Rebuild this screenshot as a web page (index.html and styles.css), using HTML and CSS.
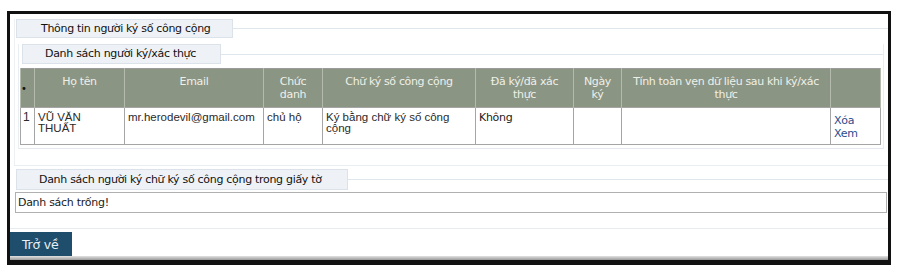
FILE: index.html
```html
<!DOCTYPE html>
<html lang="vi">
<head>
<meta charset="utf-8">
<title>Thông tin người ký số công cộng</title>
<link rel="stylesheet" href="styles.css">
</head>
<body>
<div class="frame">
  <div class="sec1">
    <div class="legend-row">
      <div class="legend legend1">Thông tin người ký số công cộng</div>
      <div class="rule"></div>
    </div>
    <div class="sec2">
      <div class="legend-row">
        <div class="legend legend2">Danh sách người ký/xác thực</div>
        <div class="rule"></div>
      </div>
      <table class="grid">
        <colgroup>
          <col style="width:14px"><col style="width:90px"><col style="width:139px"><col style="width:59px"><col style="width:153px"><col style="width:98px"><col style="width:48px"><col style="width:209px"><col style="width:50px">
        </colgroup>
        <thead>
          <tr>
            <th class="dot">•</th>
            <th>Họ tên</th>
            <th>Email</th>
            <th>Chức<br>danh</th>
            <th>Chữ ký số công cộng</th>
            <th>Đã ký/đã xác<br>thực</th>
            <th>Ngày<br>ký</th>
            <th>Tính toàn vẹn dữ liệu sau khi ký/xác<br>thực</th>
            <th></th>
          </tr>
        </thead>
        <tbody>
          <tr>
            <td class="num">1</td>
            <td class="ar">VŨ VĂN<br>THUẤT</td>
            <td class="ar">mr.herodevil@gmail.com</td>
            <td class="ar">chủ hộ</td>
            <td class="ar">Ký bằng chữ ký số công<br>cộng</td>
            <td class="ta">Không</td>
            <td></td>
            <td></td>
            <td class="links"><a href="#">Xóa</a><br><a href="#">Xem</a></td>
          </tr>
        </tbody>
      </table>
    </div>
  </div>
  <div class="sec3">
    <div class="legend-row">
      <div class="legend legend3">Danh sách người ký chữ ký số công cộng trong giấy tờ</div>
      <div class="rule"></div>
    </div>
    <div class="empty">Danh sách trống!</div>
  </div>
  <div class="actions">
    <button class="back">Trở về</button>
  </div>
  <div class="shade"></div>
</div>
</body>
</html>
```

FILE: styles.css
```css
html, body {
  margin: 0;
  padding: 0;
  background: #fff;
}
body {
  font-family: "DejaVu Sans", Verdana, sans-serif;
  font-size: 11px;
  color: #1a1a1a;
}
.frame {
  margin: 11px 0 0 7px;
  width: 878px;
  border: 3px solid #111;
  border-bottom-width: 5px;
  background: #fff;
  box-sizing: content-box;
}
.sec1 {
  margin: 5px 0 0 4px;
  padding: 0 0 16px 1px;
  border-left: 1px solid #eef1f4;
  border-bottom: 1px solid #e8eef2;
}
.legend-row {
  display: flex;
  align-items: center;
}
.legend {
  box-sizing: border-box;
  background: #eef2f6;
  border: 1px solid #dbe2ea;
  color: #111;
  white-space: nowrap;
  letter-spacing: -0.3px;
}
.legend1 {
  width: 217px;
  height: 19px;
  line-height: 17px;
  padding-left: 24px;
}
.legend2 {
  width: 199px;
  height: 20px;
  line-height: 18px;
  padding-left: 22px;
}
.legend3 {
  width: 332px;
  height: 21px;
  line-height: 19px;
  padding-left: 22px;
}
.rule {
  flex: 1;
  border-top: 1px solid #dfe6ec;
}
.sec2 {
  margin: 6px 4px 0 2px;
  border-left: 1px solid #e9eef2;
  border-right: 1px solid #e9eef2;
  border-bottom: 1px solid #e3e9ee;
  padding: 0 0 3px 1px;
}
.sec2 .legend-row {
  margin-left: 2px;
}
.grid {
  margin-top: 4px;
  border-collapse: collapse;
  table-layout: fixed;
  width: 860px;
  border: 1px solid #9a9a9a;
}
.grid th {
  background: #8b9584;
  color: #eef0e8;
  font-weight: normal;
  font-size: 11px;
  letter-spacing: -0.35px;
  line-height: 13px;
  height: 39px;
  box-sizing: border-box;
  padding: 6px 2px 0;
  vertical-align: top;
  text-align: center;
  border-left: 1px solid #b4baad;
  border-right: 1px solid #b4baad;
}
.grid th.dot {
  color: #111;
  padding: 13px 0 0;
  text-align: left;
  font-size: 10px;
}
.grid td {
  height: 37px;
  box-sizing: border-box;
  border: 1px solid #a5a5a5;
  vertical-align: top;
  padding: 4px 2px 0 3px;
  line-height: 11px;
}
.grid td.ar {
  font-family: "Liberation Sans", Arial, sans-serif;
  font-size: 11.5px;
  color: #2a2a2a;
}
.grid td.num {
  font-family: "Liberation Sans", Arial, sans-serif;
  font-size: 12px;
  padding: 4px 0 0 2px;
  color: #2a2a2a;
}
.grid td.ta {
  letter-spacing: -0.3px;
  line-height: 13px;
  padding-top: 3px;
}
.grid td.links {
  line-height: 13px;
  padding-top: 6px;
}
.links a {
  color: #2d4a8c;
  text-decoration: none;
  letter-spacing: -0.3px;
}
.sec3 {
  margin: 3px 0 0 6px;
}
.empty {
  box-sizing: border-box;
  margin: 2px 1px 0 -1px;
  height: 21px;
  border: 1px solid #b0b0b0;
  line-height: 19px;
  padding-left: 2px;
  letter-spacing: -0.3px;
}
.actions {
  margin-top: 15px;
  border-top: 1px solid #e6ecf0;
  padding-top: 3px;
}
.back {
  display: block;
  width: 62px;
  height: 24px;
  margin: 0;
  border: 0;
  background: #1e4e6c;
  color: #e9eff4;
  font-family: "DejaVu Sans", Verdana, sans-serif;
  font-size: 12.5px;
  letter-spacing: -0.2px;
  text-align: left;
  padding: 0 0 0 12px;
}
.shade {
  height: 4px;
  background: linear-gradient(#e2e2e2, #9a9a9a);
}
```
